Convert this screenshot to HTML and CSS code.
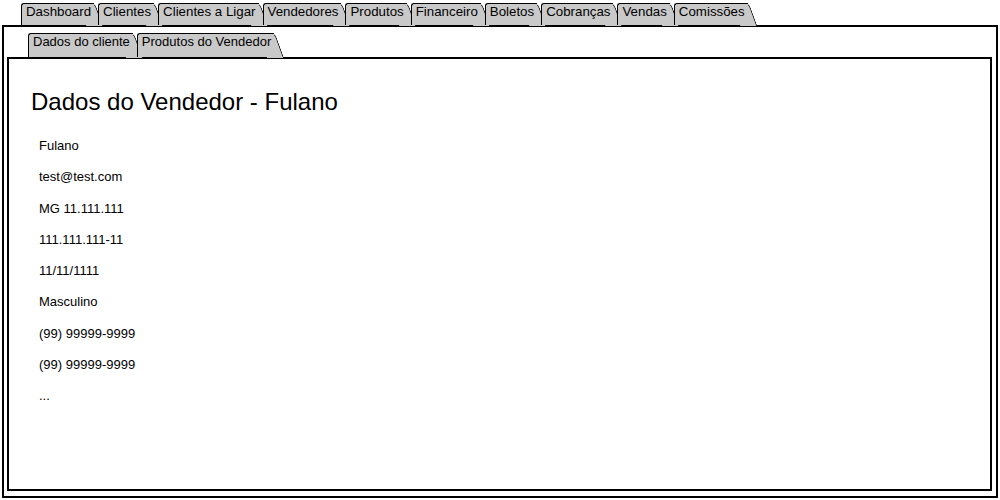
FILE: index.html
```html
<!DOCTYPE html>
<html lang="pt-BR">
<head>
<meta charset="utf-8">
<title>Dados do Vendedor</title>
<link rel="stylesheet" href="styles.css">
</head>
<body>
<div class="app">
  <nav class="tabs tabs-main">
    <div class="tab">Dashboard</div>
    <div class="tab">Clientes</div>
    <div class="tab">Clientes a Ligar</div>
    <div class="tab">Vendedores</div>
    <div class="tab">Produtos</div>
    <div class="tab">Financeiro</div>
    <div class="tab">Boletos</div>
    <div class="tab">Cobranças</div>
    <div class="tab">Vendas</div>
    <div class="tab">Comissões</div>
  </nav>
  <section class="panel panel-outer">
    <nav class="tabs tabs-sub">
      <div class="tab tab-sub">Dados do cliente</div>
      <div class="tab tab-sub">Produtos do Vendedor</div>
    </nav>
    <div class="panel panel-inner">
      <h1 class="title">Dados do Vendedor - Fulano</h1>
      <ul class="fields">
        <li>Fulano</li>
        <li>test@test.com</li>
        <li>MG 11.111.111</li>
        <li>111.111.111-11</li>
        <li>11/11/1111</li>
        <li>Masculino</li>
        <li>(99) 99999-9999</li>
        <li>(99) 99999-9999</li>
        <li>...</li>
      </ul>
    </div>
  </section>
</div>
</body>
</html>
```
FILE: styles.css
```css
html, body {
  margin: 0;
  padding: 0;
  background: #fff;
}

body {
  font-family: "Liberation Sans", Arial, sans-serif;
  color: #000;
}

.app {
  box-sizing: border-box;
  width: 1000px;
  height: 500px;
  padding: 3px 2px 2px 2px;
  display: flex;
  flex-direction: column;
}

.tabs {
  position: relative;
  z-index: 0;
  display: flex;
  flex: none;
}

.tabs-main {
  padding-left: 19px;
  height: 22px;
}

.tabs-sub {
  padding-left: 21px;
  height: 24px;
}

.tab {
  position: relative;
  box-sizing: border-box;
  height: 100%;
  padding: 0 3px 0 4px;
  background: #c9c9c9;
  border-left: 1.5px solid #000;
  border-top: 1.5px solid #000;
  border-top-left-radius: 3px;
  font-size: 13.3px;
  line-height: 16px;
  white-space: nowrap;
}

.tab-sub {
  font-size: 13px;
}

.tab + .tab {
  margin-left: 4px;
}

.tab::after {
  content: "";
  position: absolute;
  z-index: -1;
  top: -1.5px;
  bottom: 0;
  left: calc(100% - 16px);
  width: 16px;
  background: #c9c9c9;
  border-top: 1.5px solid #000;
  border-right: 1.5px solid #000;
  border-top-right-radius: 5px;
  transform: skewX(20deg);
  transform-origin: top left;
}

.panel {
  box-sizing: border-box;
  border: 2px solid #000;
  background: #fff;
}

.panel-outer {
  flex: 1;
  display: flex;
  flex-direction: column;
  padding: 6px 4px 5px 3px;
}

.panel-inner {
  flex: 1;
  padding: 29px 20px 0 22px;
}

.title {
  margin: 0 0 14px 0;
  font-size: 24px;
  line-height: 28px;
  font-weight: normal;
}

.fields {
  list-style: none;
  margin: 0;
  padding: 0 0 0 8px;
  font-size: 13px;
  line-height: 31.25px;
}
```
